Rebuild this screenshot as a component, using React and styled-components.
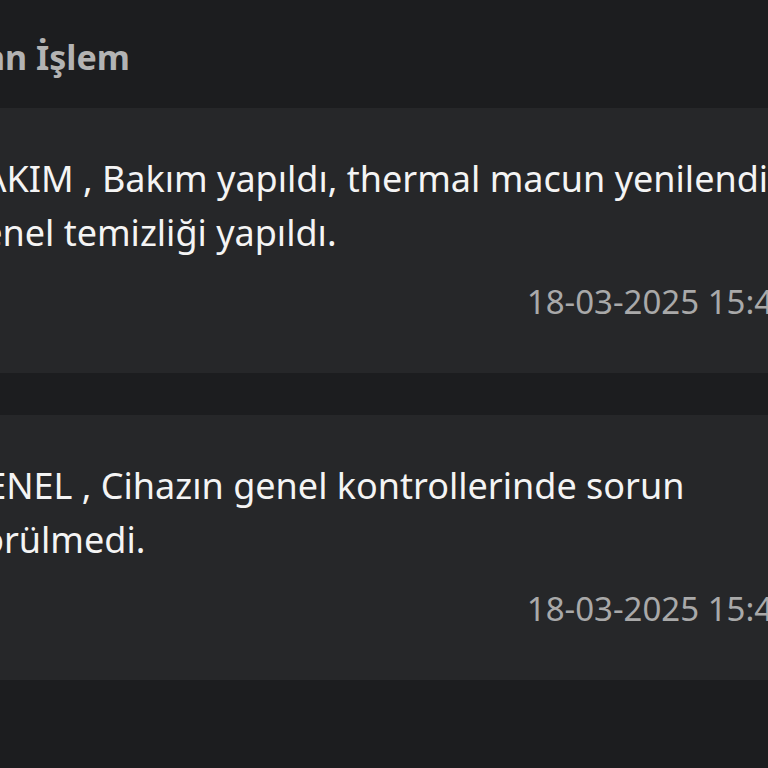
import styled, { createGlobalStyle } from 'styled-components';

const GlobalStyle = createGlobalStyle`
  html, body {
    margin: 0;
    padding: 0;
    background: #1c1d1f;
  }
  body {
    font-family: "Noto Sans", "Open Sans", sans-serif;
  }
`;

const history = [
  {
    id: 1,
    lines: ['BAKIM , Bakım yapıldı, thermal macun yenilendi ve cihazın', 'genel temizliği yapıldı.'],
    date: '18-03-2025 15:42',
  },
  {
    id: 2,
    lines: ['GENEL , Cihazın genel kontrollerinde sorun', 'görülmedi.'],
    date: '18-03-2025 15:40',
  },
];

const HistoryPanel = () => {
  return (
    <>
      <GlobalStyle />
      <StyledPage>
        <div className="content">
          <Title>Son Yapılan İşlem</Title>
          <CardList>
            {history.map((item) => (
              <Card key={item.id}>
                <Description>
                  {item.lines.map((line, i) => (
                    <span key={i}>{line}</span>
                  ))}
                </Description>
                <DateText>{item.date}</DateText>
              </Card>
            ))}
          </CardList>
        </div>
      </StyledPage>
    </>
  );
};

const StyledPage = styled.div`
  width: 768px;
  height: 768px;
  overflow: hidden;
  background: #1c1d1f;
  .content {
    margin-left: -168px;
    width: 1000px;
    display: flex;
    flex-direction: column;
  }
`;

const Title = styled.h2`
  margin: 0;
  padding: 37px 0 0 0;
  font-size: 34px;
  line-height: 40px;
  font-weight: 700;
  color: #b3b3b3;
  white-space: nowrap;
`;

const CardList = styled.div`
  margin-top: 31px;
  display: flex;
  flex-direction: column;
  gap: 42px;
`;

const Card = styled.div`
  background: #262729;
  padding: 44px 40px 51px 128px;
  display: flex;
  flex-direction: column;
`;

const Description = styled.p`
  margin: 0;
  font-size: 36px;
  line-height: 54px;
  color: #f4f4f4;
  white-space: nowrap;
  span {
    display: block;
  }
`;

const DateText = styled.div`
  margin-top: 22px;
  align-self: flex-end;
  font-size: 33px;
  line-height: 40px;
  color: #a9a9a9;
  white-space: nowrap;
`;

export default HistoryPanel;
